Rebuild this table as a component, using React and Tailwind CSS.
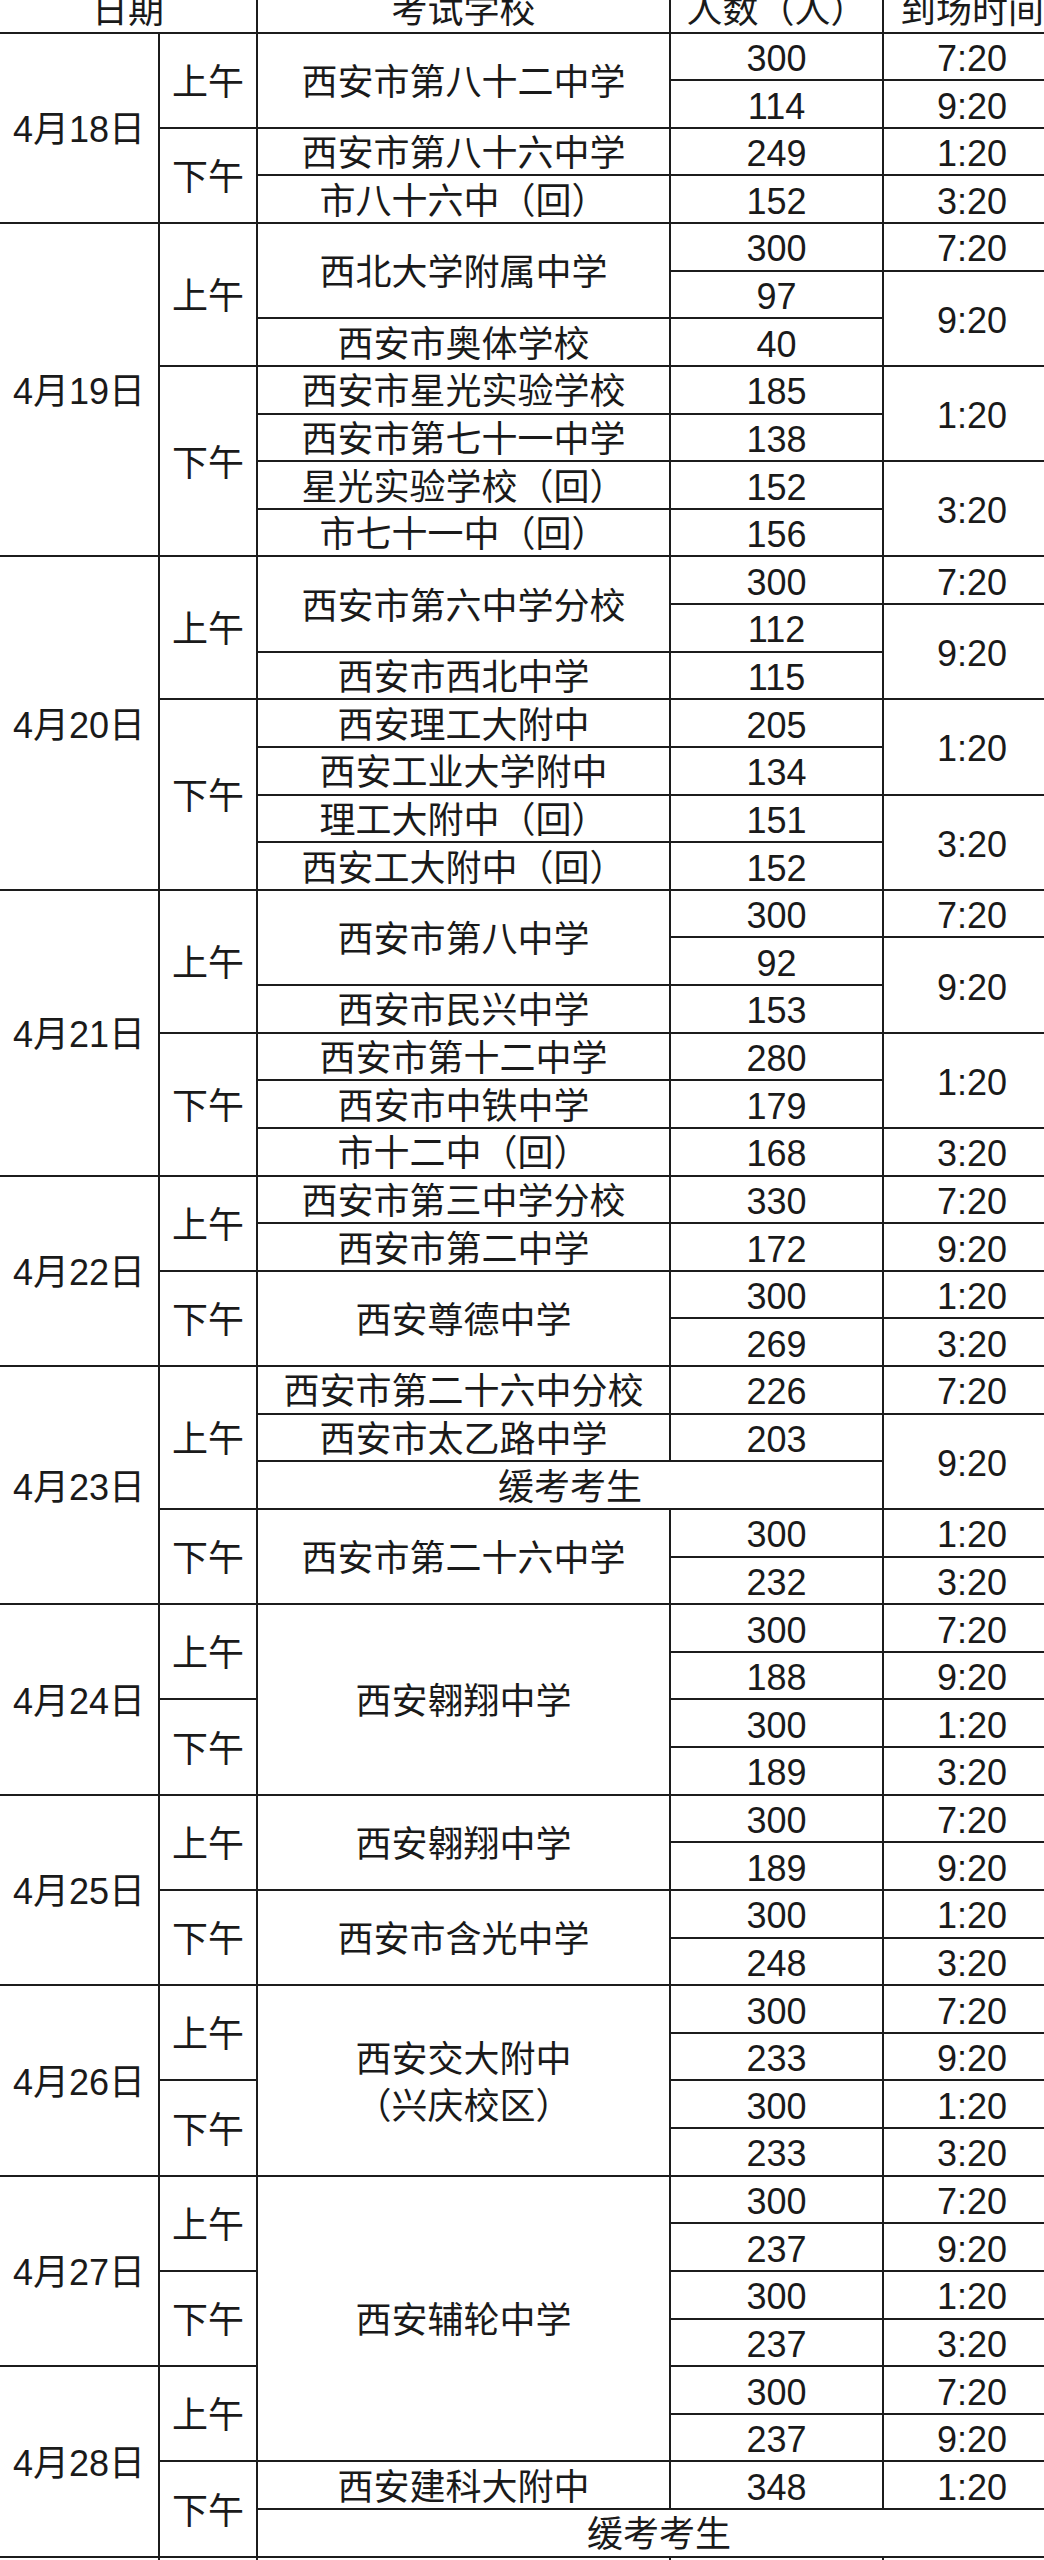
import React from "react";

// each row: [date?, period?, school?, count?, time?] — cells carry their own spans
const D = (text, rs) => ({ k: "date", text, rs });
const P = (text, rs) => ({ k: "period", text, rs });
const S = (text, rs = 1, cs = 1) => ({ k: "school", text, rs, cs });
const N = (text) => ({ k: "count", text });
const T = (text, rs = 1) => ({ k: "time", text, rs });

const rows = [
  // 4月18日
  [D("4月18日", 4), P("上午", 2), S("西安市第八十二中学", 2), N("300"), T("7:20")],
  [N("114"), T("9:20")],
  [P("下午", 2), S("西安市第八十六中学"), N("249"), T("1:20")],
  [S("市八十六中（回）"), N("152"), T("3:20")],
  // 4月19日
  [D("4月19日", 7), P("上午", 3), S("西北大学附属中学", 2), N("300"), T("7:20")],
  [N("97"), T("9:20", 2)],
  [S("西安市奥体学校"), N("40")],
  [P("下午", 4), S("西安市星光实验学校"), N("185"), T("1:20", 2)],
  [S("西安市第七十一中学"), N("138")],
  [S("星光实验学校（回）"), N("152"), T("3:20", 2)],
  [S("市七十一中（回）"), N("156")],
  // 4月20日
  [D("4月20日", 7), P("上午", 3), S("西安市第六中学分校", 2), N("300"), T("7:20")],
  [N("112"), T("9:20", 2)],
  [S("西安市西北中学"), N("115")],
  [P("下午", 4), S("西安理工大附中"), N("205"), T("1:20", 2)],
  [S("西安工业大学附中"), N("134")],
  [S("理工大附中（回）"), N("151"), T("3:20", 2)],
  [S("西安工大附中（回）"), N("152")],
  // 4月21日
  [D("4月21日", 6), P("上午", 3), S("西安市第八中学", 2), N("300"), T("7:20")],
  [N("92"), T("9:20", 2)],
  [S("西安市民兴中学"), N("153")],
  [P("下午", 3), S("西安市第十二中学"), N("280"), T("1:20", 2)],
  [S("西安市中铁中学"), N("179")],
  [S("市十二中（回）"), N("168"), T("3:20")],
  // 4月22日
  [D("4月22日", 4), P("上午", 2), S("西安市第三中学分校"), N("330"), T("7:20")],
  [S("西安市第二中学"), N("172"), T("9:20")],
  [P("下午", 2), S("西安尊德中学", 2), N("300"), T("1:20")],
  [N("269"), T("3:20")],
  // 4月23日
  [D("4月23日", 5), P("上午", 3), S("西安市第二十六中分校"), N("226"), T("7:20")],
  [S("西安市太乙路中学"), N("203"), T("9:20", 2)],
  [S("缓考考生", 1, 2)],
  [P("下午", 2), S("西安市第二十六中学", 2), N("300"), T("1:20")],
  [N("232"), T("3:20")],
  // 4月24日
  [D("4月24日", 4), P("上午", 2), S("西安翱翔中学", 4), N("300"), T("7:20")],
  [N("188"), T("9:20")],
  [P("下午", 2), N("300"), T("1:20")],
  [N("189"), T("3:20")],
  // 4月25日
  [D("4月25日", 4), P("上午", 2), S("西安翱翔中学", 2), N("300"), T("7:20")],
  [N("189"), T("9:20")],
  [P("下午", 2), S("西安市含光中学", 2), N("300"), T("1:20")],
  [N("248"), T("3:20")],
  // 4月26日
  [D("4月26日", 4), P("上午", 2), S("西安交大附中\n（兴庆校区）", 4), N("300"), T("7:20")],
  [N("233"), T("9:20")],
  [P("下午", 2), N("300"), T("1:20")],
  [N("233"), T("3:20")],
  // 4月27日 / 28日
  [D("4月27日", 4), P("上午", 2), S("西安辅轮中学", 6), N("300"), T("7:20")],
  [N("237"), T("9:20")],
  [P("下午", 2), N("300"), T("1:20")],
  [N("237"), T("3:20")],
  [D("4月28日", 4), P("上午", 2), N("300"), T("7:20")],
  [N("237"), T("9:20")],
  [P("下午", 2), S("西安建科大附中"), N("348"), T("1:20")],
  [S("缓考考生", 1, 3)],
];

const baseCls =
  "border-2 border-[#1c1c1c] p-0 pt-[5px] text-center align-middle whitespace-pre-line";
const cellCls = baseCls + " leading-none";

function Cell({ c }) {
  const cls = c.text.includes("\n") ? baseCls + " leading-[47px]" : cellCls;
  return (
    <td rowSpan={c.rs || 1} colSpan={c.cs || 1} className={cls}>
      {c.text}
    </td>
  );
}

function App() {
  return (
    <div className="w-[1044px] h-[2560px] overflow-hidden bg-white">
      <table
        className="-mt-[16px] -ml-[2px] w-[1062px] table-fixed border-collapse text-[36px] text-[#1a1a1a]"
        style={{ fontFamily: '"Liberation Sans", "Noto Sans CJK SC", sans-serif' }}
      >
        <colgroup>
          <col className="w-[160px]" />
          <col className="w-[98px]" />
          <col className="w-[413px]" />
          <col className="w-[213px]" />
          <col className="w-[178px]" />
        </colgroup>
        <thead>
          <tr className="h-[47.6px]">
            <th colSpan={2} className={cellCls + " font-normal"}>日期</th>
            <th className={cellCls + " font-normal"}>考试学校</th>
            <th className={cellCls + " font-normal"}>人数（人）</th>
            <th className={cellCls + " font-normal"}>到场时间</th>
          </tr>
        </thead>
        <tbody>
          {rows.map((r, i) => (
            <tr key={i} className="h-[47.64px]">
              {r.map((c, j) => (
                <Cell key={j} c={c} />
              ))}
            </tr>
          ))}
          <tr className="h-[47.6px]">
            <td className={cellCls}></td>
            <td className={cellCls}></td>
            <td className={cellCls}></td>
            <td className={cellCls}></td>
            <td className={cellCls}></td>
          </tr>
        </tbody>
      </table>
    </div>
  );
}

export default App;
